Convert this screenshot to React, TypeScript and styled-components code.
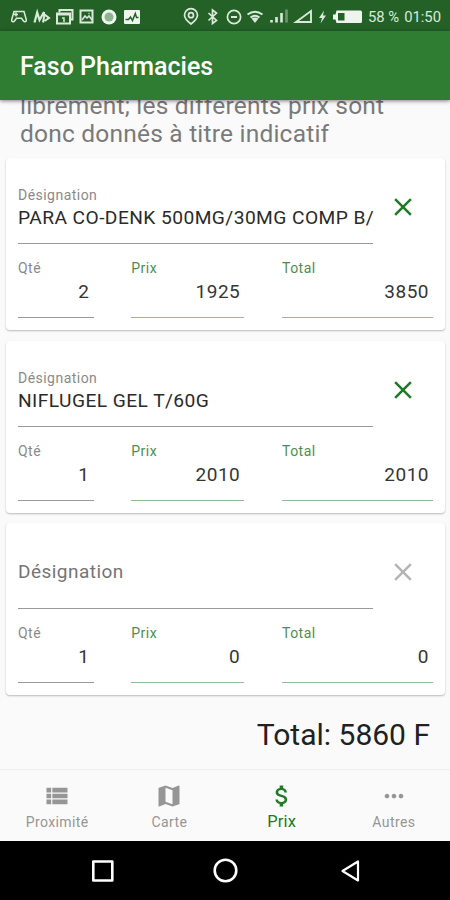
import React from "react";
import styled, { createGlobalStyle } from "styled-components";
import { MdViewList, MdMap, MdAttachMoney, MdMoreHoriz, MdClose } from "react-icons/md";

const GlobalStyle = createGlobalStyle`
  * { box-sizing: border-box; }
  body {
    margin: 0;
    background: #fafafa;
    font-family: Roboto, "Liberation Sans", sans-serif;
  }
`;

const Screen = styled.div`
  width: 450px;
  height: 900px;
  display: flex;
  flex-direction: column;
  overflow: hidden;
  background: #fafafa;
`;

const StatusBar = styled.div`
  flex: none;
  height: 31px;
  display: flex;
  justify-content: space-between;
  background: #236127;
  color: #dbe9db;
`;

const StatusIcons = styled.svg<{ $width: number }>`
  flex: none;
  width: ${(p) => p.$width}px;
  height: 31px;
  display: block;
`;

const StatusGroup = styled.div`
  display: flex;
  width: 268px;
`;

const StatusText = styled.span<{ $gap: number }>`
  margin-left: ${(p) => p.$gap}px;
  font-size: 14.8px;
  line-height: 34px;
  white-space: nowrap;
`;

const AppBar = styled.header`
  flex: none;
  height: 69px;
  padding-left: 20px;
  position: relative;
  z-index: 1;
  background: #2e7d32;
  box-shadow: 0 1px 4px rgba(0, 0, 0, 0.5);
`;

const AppTitle = styled.h1`
  margin: 0;
  font-size: 25px;
  font-weight: 500;
  line-height: 71px;
  color: #fff;
`;

const Content = styled.main`
  flex: 1;
  min-height: 0;
  display: flex;
  flex-direction: column;
  justify-content: flex-end;
  overflow: hidden;
`;

const Notice = styled.p`
  margin: 0 20px 10px;
  font-size: 24.5px;
  line-height: 28px;
  letter-spacing: 0.21px;
  color: #7a7a7a;
`;

const NoticeLine = styled.span`
  display: block;
  white-space: nowrap;
`;

const CardList = styled.div`
  display: flex;
  flex-direction: column;
  gap: 10.5px;
  padding: 0 5px 0 6px;
`;

const Card = styled.section`
  height: 172px;
  padding: 0 12px;
  border-radius: 4px;
  background: #fff;
  box-shadow: 0 1px 2px rgba(0, 0, 0, 0.26);
`;

const TopRow = styled.div`
  display: flex;
  height: 86px;
`;

const Designation = styled.div`
  width: 355px;
  height: 86px;
  padding-top: 27px;
  border-bottom: 1px solid #9a9a9a;
`;

const Label = styled.div<{ $green?: boolean }>`
  font-size: 14px;
  line-height: 20px;
  letter-spacing: 0.47px;
  color: ${(p) => (p.$green ? "#4c8f50" : "#8a8a8a")};
`;

const Name = styled.div`
  font-size: 19.2px;
  line-height: 26px;
  letter-spacing: 0.43px;
  white-space: nowrap;
  color: #2a2a2a;
`;

const Placeholder = styled.div`
  padding-top: 9px;
  font-size: 19px;
  line-height: 26px;
  letter-spacing: 0.47px;
  color: #757575;
`;

const RemoveButton = styled.button<{ $disabled?: boolean }>`
  width: 60px;
  height: 98px;
  padding: 0;
  border: 0;
  display: flex;
  align-items: center;
  justify-content: center;
  background: none;
  color: ${(p) => (p.$disabled ? "#b5b5b5" : "#1f7a25")};
`;

const Amounts = styled.div`
  display: grid;
  grid-template-columns: 75.5px 113px 151px;
  justify-content: space-between;
`;

const Amount = styled.div<{ $green?: boolean }>`
  height: 74px;
  padding-top: 14px;
  border-bottom: 1px solid ${(p) => (p.$green ? "#93bb95" : "#9a9a9a")};
`;

const Value = styled.div`
  padding-right: 4px;
  margin-top: 1px;
  font-size: 19px;
  line-height: 26px;
  letter-spacing: 0.5px;
  text-align: right;
  color: #363636;
`;

const GrandTotal = styled.div`
  height: 74px;
  padding-right: 20px;
  font-size: 30px;
  line-height: 79px;
  text-align: right;
  color: #212121;
`;

const Tabs = styled.nav`
  flex: none;
  height: 72px;
  padding-left: 1px;
  display: grid;
  grid-template-columns: repeat(4, 1fr);
  border-top: 1px solid #eeeeee;
  background: #fafafa;
`;

const Tab = styled.div<{ $active?: boolean }>`
  display: flex;
  flex-direction: column;
  align-items: center;
  padding-top: 12px;
  color: ${(p) => (p.$active ? "#217a27" : "#969696")};
`;

const TabLabel = styled.span<{ $active?: boolean }>`
  margin-top: 1px;
  font-size: ${(p) => (p.$active ? 16.5 : 14)}px;
  line-height: ${(p) => (p.$active ? 21 : 22)}px;
  letter-spacing: ${(p) => (p.$active ? 0.2 : 0.4)}px;
`;

const SystemBar = styled.div`
  flex: none;
  height: 59px;
  background: #000;
`;

const SystemIcons = styled.svg`
  display: block;
  width: 450px;
  height: 59px;
`;

const NotificationIcons = () => (
  <StatusIcons $width={150} viewBox="0 0 150 31" fill="none" stroke="currentColor" strokeWidth="1.5">
    <path d="M14 11.500h10l2.300 8.300c.4 1.800-1.700 2.600-2.800 1.200l-2-2.800h-5l-2 2.800c-1.100 1.400-3.200.6-2.800-1.200zM16 12.500v4M14 14.500h4M21 14.500h.1M23 16h.1" />
    <path d="M34.500 22.500l2.700-10 2.300 7.500 4.500-8-.5 4" strokeWidth="2.200" />
    <path d="M43 22.500l1.500-8 4.500 3.500-4.500 3" strokeWidth="2" />
    <path d="M59.500 12.500V10H72.500V19.500H71" strokeWidth="2" />
    <path d="M57 13.500h13v10H57zM57 14.500h13" strokeWidth="2" />
    <path d="M62 18h2v4" />
    <rect x="80.500" y="10.500" width="12" height="12" strokeWidth="2" />
    <path d="M82 20l3-4 2 2 2-2 3 4M88.500 13.500h1" />
    <circle cx="109" cy="17" r="7.500" fill="#eef5ee" stroke="none" />
    <circle cx="109" cy="17" r="4.500" fill="#8db68f" stroke="none" />
    <rect x="124" y="10" width="16" height="14" rx="1" fill="#eef5ee" stroke="none" />
    <path d="M125.500 19.500h3l2-2.500 2 3.500 2.800-7 1.200 4h2" stroke="#236127" />
  </StatusIcons>
);

const DeviceIcons = () => (
  <StatusIcons $width={181} viewBox="182 0 181 31" fill="none" stroke="currentColor" strokeWidth="1.700">
    <path d="M191 24c-4.200-3.300-6.500-6-6.500-8.800a6.500 6.500 0 0 1 13 0c0 2.800-2.300 5.500-6.500 8.800z" />
    <circle cx="191" cy="15.200" r="2.500" />
    <path d="M208.500 13l8 7.500-4 3V10l4 3-8 7.500" />
    <circle cx="234" cy="17" r="6.600" />
    <path d="M231 17h6" strokeWidth="2" />
    <path d="M247.500 14.500q7.500-5.500 15 0M250.500 17.500q4.500-3.500 9 0" strokeWidth="1.900" />
    <path d="M251.500 18.500q3.500-2 7 0L255 23z" fill="currentColor" stroke="none" />
    <path d="M271.500 20v2.500M276.500 17v5.500M281.500 13v9.500" strokeWidth="2.600" />
    <path d="M286.500 9.500v13" strokeWidth="2.600" opacity=".4" />
    <path d="M296 22h15V11z" strokeWidth="1.900" />
    <path d="M324 10.500l-5 7.500h3l-1.500 5.500 5.500-8h-3z" fill="currentColor" stroke="none" />
    <path d="M336.500 10.500H360.500a1.500 1.500 0 0 1 1.500 1.500v9.500a1.500 1.500 0 0 1-1.500 1.500H336.500l-1-3.500H333v-5h2.500z" fill="#eef5ee" stroke="none" />
    <path d="M338 13h6.500v7.500H338z" fill="#236127" stroke="none" />
  </StatusIcons>
);

interface Item {
  name?: string;
  qty: number;
  price: number;
}

const items: Item[] = [
  { name: "PARA CO-DENK 500MG/30MG COMP B/", qty: 2, price: 1925 },
  { name: "NIFLUGEL GEL T/60G", qty: 1, price: 2010 },
  { qty: 1, price: 0 },
];

const tabs = [
  { label: "Proximité", Icon: MdViewList },
  { label: "Carte", Icon: MdMap },
  { label: "Prix", Icon: MdAttachMoney, active: true },
  { label: "Autres", Icon: MdMoreHoriz },
];

const ItemCard = ({ name, qty, price }: Item) => (
  <Card>
    <TopRow>
      <Designation>
        {name ? (
          <>
            <Label>Désignation</Label>
            <Name>{name}</Name>
          </>
        ) : (
          <Placeholder>Désignation</Placeholder>
        )}
      </Designation>
      <RemoveButton $disabled={!name} aria-label="Supprimer">
        <MdClose size={30} />
      </RemoveButton>
    </TopRow>
    <Amounts>
      <Amount>
        <Label>Qté</Label>
        <Value>{qty}</Value>
      </Amount>
      <Amount $green>
        <Label $green>Prix</Label>
        <Value>{price}</Value>
      </Amount>
      <Amount $green>
        <Label $green>Total</Label>
        <Value>{qty * price}</Value>
      </Amount>
    </Amounts>
  </Card>
);

export default function App() {
  const total = items.reduce((sum, item) => sum + item.qty * item.price, 0);
  return (
    <Screen>
      <GlobalStyle />
      <StatusBar>
        <NotificationIcons />
        <StatusGroup>
          <DeviceIcons />
          <StatusText $gap={5}>58 %</StatusText>
          <StatusText $gap={5}>01:50</StatusText>
        </StatusGroup>
      </StatusBar>
      <AppBar>
        <AppTitle>Faso Pharmacies</AppTitle>
      </AppBar>
      <Content>
        <Notice>
          <NoticeLine>librement; les différents prix sont</NoticeLine>
          <NoticeLine>donc donnés à titre indicatif</NoticeLine>
        </Notice>
        <CardList>
          {items.map((item, i) => (
            <ItemCard key={i} {...item} />
          ))}
        </CardList>
        <GrandTotal>Total: {total} F</GrandTotal>
      </Content>
      <Tabs>
        {tabs.map(({ label, Icon, active }) => (
          <Tab key={label} $active={active}>
            <Icon size={28} />
            <TabLabel $active={active}>{label}</TabLabel>
          </Tab>
        ))}
      </Tabs>
      <SystemBar>
        <SystemIcons viewBox="0 0 450 59" fill="none" stroke="#fff" strokeWidth="2.600" strokeLinejoin="round">
          <rect x="93.300" y="20.500" width="19" height="19" />
          <circle cx="225.500" cy="29.500" r="10.800" />
          <path d="M358 20.500v19L342.500 30z" strokeWidth="2.200" />
        </SystemIcons>
      </SystemBar>
    </Screen>
  );
}
